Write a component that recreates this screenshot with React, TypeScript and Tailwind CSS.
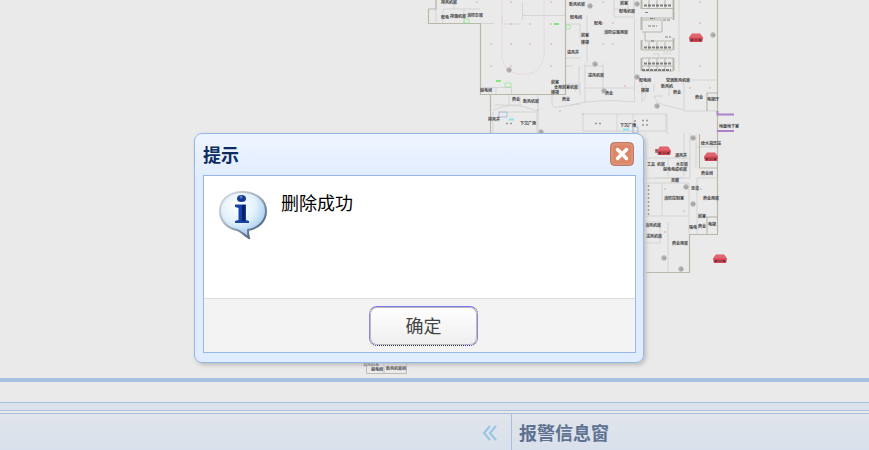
import { useState } from 'react';

type Point = [number, number];
type Label = [number, number, string];

const walls = [
  'M436 0V9H428.500V23.500H480.500V94.500H490.500V134',
  'M480 94.500H566M565.500 0V95',
  'M717.500 0V234.500H689.500V272.500H646',
  'M707 111V93H717M699.500 134V168H717M707 234V217H717',
];

const partitions = [
  'M436 0V23M454 0V9M443 10V23M464 9V23M443 9H480M502 15V23',
  'M522.500 2V20M522 15.500H566M480 23.500H494M504 24H521',
  'M511.500 87V95M481 87.500H511M496 87V95M509 95V105M520 95V105M495 105H521',
  'M493 112V134M498 112H537V134M538 95V134M552 95V104Q553 108 558 107L580 104',
  'M566 24H580V38M566 58H581M566 66H573M566 84H580V95M575 84V92',
  'M587 15V63M579 66V90M585 63V103M603 63V88M585 88H634M634.500 18V102M585 66H603',
  'M614 0V17H634V0M614 9H628V0M642 80V100M646 85Q647 100 641 102M654 84V92M654 96Q656 104 668 106L684 110',
  'M679 0V72M679 80H717M684 80V111H717M669 78V96M654 96H663',
  'M583 114H666V131H583ZM617 114V131M633 114V134M667 114V134',
  'M646 158H690M668 158V176M684 133V176M690 133V178M646 183H662V216M689 183V216H646M646 178H690M696 147H717',
  'M646 222H660V243H646M646 234H660M668 222V272M689 217V234M697 178V234M697 217H717M662 183H689',
  'M655 178H684M696 134V168M697 178H717',
];

const labels: Label[] = [
  [441, 4, '排风机房'], [441, 19, '配电'], [450, 18, '排烟机房'], [467, 17, '消防泵房'],
  [569, 6, '新风机房'], [570, 19, '配电间'], [567, 54, '进风井'], [480, 92, '弱电间'],
  [551, 84, '前室'], [554, 89, '合用前室机房'], [551, 94, '楼梯'], [512, 101, '商业'],
  [523, 103, '新风机房'], [562, 101, '商业'], [488, 121, '排风井'], [520, 125, '下沉广场'],
  [620, 5, '前室'], [619, 13, '配电机房'], [604, 34, '消防设施用房'], [581, 37, '前室'],
  [581, 44, '楼梯'], [588, 77, '进风机房'], [605, 95, '商业'], [639, 82, '配电间'],
  [641, 92, '楼梯'], [666, 82, '空调新风机房'], [661, 88, '新风机'], [673, 94, '商业'],
  [695, 99, '商业'], [707, 101, '电梯厅'], [719, 128, '地面地下室'], [620, 127, '下沉广场'],
  [594, 25, '配电'], [655, 153, '配电间'], [675, 157, '通风井'], [676, 166, '水泵房'],
  [647, 166, '工具'], [657, 166, '机房'], [663, 171, '弱电电缆机房'], [671, 182, '走廊'],
  [664, 200, '消防控制室'], [703, 200, '商业用房'], [701, 145, '给水减压站'], [701, 175, '商业间'],
  [698, 218, '前室'], [689, 229, '强电'], [698, 228, '商业'], [708, 226, '电梯'],
  [645, 227, '通风机房'], [646, 238, '进风机房'], [672, 245, '商业用房'], [691, 190, '走道'],
  [371, 371, '弱电间'], [386, 370, '新风机房间'], [363, 366, '合用前室'],
];

const cameras: Point[] = [
  [509, 70], [541, 132], [590, 6], [595, 64], [604, 91], [637, 4], [637, 77], [657, 106],
  [713, 35], [693, 138], [686, 187], [693, 204], [664, 258], [681, 269],
];

const alarms: Point[] = [[696, 38], [664, 151], [711, 157], [720, 259]];

const columns: Point[] = [
  [491, 44], [511, 44], [530, 44], [551, 44], [491, 66], [511, 66], [551, 66], [477, 2],
  [511, 2], [551, 2], [511, 24], [530, 24], [551, 24], [603, 2], [603, 23], [613, 23],
  [603, 44], [613, 44], [625, 86], [700, 2], [700, 23], [700, 66], [690, 88], [710, 88],
  [560, 111], [538, 110], [583, 114], [665, 189], [684, 211], [665, 232], [701, 189],
];

function FloorPlan() {
  return (
    <svg viewBox="0 0 869 378" className="absolute inset-0 h-full w-full" aria-hidden="true">
      <g fill="none" stroke="#cfcfcf" strokeWidth="0.8">
        {partitions.map((d) => (
          <path key={d} d={d} />
        ))}
        <path d="M493 110Q510 103 525 107L537 111M570 105Q600 98 634 102" />
        <path d="M502 0V57Q504 73 519 74H528Q542 72 544 56V0" stroke="#e4d6df" />
      </g>
      <g fill="none" stroke="#b9b9aa" strokeWidth="1.200">
        {walls.map((d) => (
          <path key={d} d={d} />
        ))}
      </g>

      {/* elevator core */}
      <g fill="none" stroke="#b4b8ac" strokeWidth="1">
        <path d="M641.500 0V9M673.500 0V20M641.500 17V30M641.500 40V50M673.500 38V50M641.500 58V71M673.500 58V71" strokeWidth="2" />
        <path d="M642 8.500H673M642 18H672M642 32H662V20H642M645 32V41H673M642 50H673M642 58H673M642 66H673M642 71H673" />
        <path d="M649 0V9M657 0V9M665 0V9M649 42V50M657 42V50M665 42V50M649 58V70M657 58V70M665 58V70" />
        <path d="M653 54H659V58M664 51V55M667 51V55M670 51V55" stroke="#d8d0d0" />
      </g>
      <g stroke="#555" strokeWidth="2" strokeDasharray="3 1" opacity="0.7">
        <path d="M644 5.500H671M644 47.500H671M644 63.500H671M642 70H671" />
        <path d="M645 12.500H649M650 18.500H655M663 20H670M648 26H657M665 37H671M651 41H655" strokeWidth="1.200" />
      </g>
      <g stroke="#999" strokeWidth="1.500" strokeDasharray="2 2">
        <path d="M648.500 185V216M506 123.500H512M595 123.500H602M642 120.500H650M642 125H650M635 120V128" />
      </g>
      <g stroke="#7fe87f" fill="none">
        <path d="M554 24H559M496 81H501" strokeWidth="2" />
        <path d="M566 25H570V29H566ZM505 83H511V87H505ZM464 19H469V23H464Z" strokeWidth="0.600" />
      </g>
      <path d="M509 119.500H514M623 129.500H629" stroke="#85e4ed" strokeWidth="2" />
      <path d="M499 112H507V117H499ZM633 127H638V133H633Z" fill="none" stroke="#a9bddb" />
      <path d="M734 114.500H717.500V111M717 131H734" fill="none" stroke="#b080c8" strokeWidth="2" />
      <path d="M366.500 363V373.500H406.500V363M384 364V373" fill="none" stroke="#bdbdb4" />

      <g fill="#444" fontSize="4" fontWeight="bold" fontFamily='"Noto Sans CJK SC", sans-serif'>
        {labels.map(([x, y, text]) => (
          <text key={`${x}-${y}`} x={x} y={y}>{text}</text>
        ))}
      </g>
      {columns.map(([x, y]) => (
        <circle key={`${x}-${y}`} cx={x} cy={y} r="1" fill="#e8bcbc" />
      ))}
      {cameras.map(([x, y]) => (
        <g key={`${x}-${y}`}>
          <circle cx={x} cy={y} r="2.200" fill="#c4c4c4" stroke="#999" strokeWidth="0.800" />
          <path d={`M${x - 1} ${y}h2v1`} fill="none" stroke="#777" strokeWidth="0.700" />
        </g>
      ))}
      {alarms.map(([x, y]) => (
        <g key={`${x}-${y}`} transform={`translate(${x - 7} ${y - 5})`}>
          <path d="M3 0.500H11L14 4.500L13 9H1L0 4.500Z" fill="#d95560" />
          <path d="M3 1H11L13 4H1Z" fill="#e0656f" />
          <path d="M0.500 5H13.500L13 9H1Z" fill="#c94450" />
          <path d="M2 6h2v2h-2zM10 6h2v2h-2z" fill="#653039" />
          <path d="M5 7h4" stroke="#913442" />
        </g>
      ))}
    </svg>
  );
}

function InfoIcon() {
  return (
    <svg viewBox="0 0 48 48" className="h-12 w-12 shrink-0" aria-hidden="true">
      <defs>
        <radialGradient id="bubble" cx="0.4" cy="0.3" r="0.75">
          <stop offset="0" stopColor="#fff" />
          <stop offset="0.5" stopColor="#e2f1fc" />
          <stop offset="1" stopColor="#8dbfec" />
        </radialGradient>
        <linearGradient id="rim" x1="0" y1="0" x2="1" y2="1">
          <stop offset="0" stopColor="#dde2e7" />
          <stop offset="0.5" stopColor="#9eabba" />
          <stop offset="1" stopColor="#29415f" />
        </linearGradient>
      </defs>
      <path
        d="M23 1C10 1 1 9 1 20C1 30 8 37 18 39C22 40 25 44 30 47C29 44 29 41 29 39C40 37 47 30 47 20C47 9 37 1 23 1Z"
        fill="url(#bubble)"
        stroke="url(#rim)"
        strokeWidth="2"
      />
      <ellipse cx="22.500" cy="7.500" rx="4.500" ry="3.500" fill="#143a91" />
      <path d="M16 13.500H27V29L30 30V32H16V30L19.500 29V17L16 16Z" fill="#1743a5" />
      <path d="M24.500 14V30" stroke="#061f66" strokeWidth="3" />
      <circle cx="22" cy="6" r="1.500" fill="#5a7fc7" />
    </svg>
  );
}

function AlertDialog({ onClose }: { onClose: () => void }) {
  return (
    <div
      role="dialog"
      aria-labelledby="dialog-title"
      className="absolute top-[133px] left-[194px] w-[450px] rounded-lg border border-[#95b8e7] bg-linear-to-b from-[#eff5ff] to-[#e0ecff] to-20% pt-2 pr-[7px] pb-[9px] pl-2 shadow-[2px_2px_4px_#bbb]"
    >
      <div className="flex h-[33px] items-start justify-between">
        <h2 id="dialog-title" className="text-lg leading-6 font-bold text-[#0e2d5f]">提示</h2>
        <button type="button" aria-label="关闭" onClick={onClose} className="mr-0.5">
          <svg viewBox="0 0 24 24" className="h-6 w-6">
            <rect x="0.500" y="0.500" width="23" height="23" rx="4" fill="#dc8868" stroke="#b97a66" />
            <rect x="2" y="2" width="20" height="20" rx="3" fill="none" stroke="#e09a80" />
            <path d="M7.500 7.500L16.500 16.500M16.500 7.500L7.500 16.500" stroke="#fff" strokeWidth="3.500" strokeLinecap="round" />
          </svg>
        </button>
      </div>
      <div className="border border-[#95b8e7] bg-white">
        <div className="flex h-[122px] gap-[14px] p-[15px]">
          <InfoIcon />
          <p className="text-lg leading-[22px] text-black">删除成功</p>
        </div>
        <div className="flex justify-center border-t border-[#ddd] bg-[#f3f3f3] pt-[7px] pb-1.5 pl-2">
          <button
            type="button"
            onClick={onClose}
            className="h-10 w-[109px] rounded-lg border border-dotted border-[#2020bb] border-t-[#7777ee] [border-top-style:solid] bg-linear-to-b from-white to-[#eee] pb-0.5 text-lg text-[#444] shadow-[inset_0_0_0_1px_#bbb]"
          >
            确定
          </button>
        </div>
      </div>
    </div>
  );
}

export default function App() {
  const [open, setOpen] = useState(true);

  return (
    <div className="relative flex min-h-screen flex-col bg-[#eaeaea] font-['Noto_Sans_CJK_SC',sans-serif]">
      <main className="relative flex-1 overflow-hidden">
        <FloorPlan />
      </main>

      <footer className="border-t-4 border-[#aac0df] pt-5">
        <div className="h-[9px] border-y border-[#a7c0e2] bg-[#dce2ea]" />
        <div className="mt-0.5 flex h-[37px] border-t border-[#a9bdd6] bg-linear-to-b from-[#e1e5ec] to-[#d8e0eb]">
          <div className="flex w-[512px] items-center justify-end border-r border-[#a9bfdc] pt-0.5 pr-[13px]">
            <button type="button" aria-label="折叠">
              <svg viewBox="0 0 16 16" className="h-4 w-4" fill="none" stroke="#9cc5e3" strokeWidth="2.200">
                <path d="M8 1L2 8L8 15M14 1L8 8L14 15" />
              </svg>
            </button>
          </div>
          <h2 className="flex items-center px-[7px] text-lg leading-6 font-bold text-[#5f7291]">报警信息窗</h2>
        </div>
      </footer>

      {open && <AlertDialog onClose={() => setOpen(false)} />}
    </div>
  );
}
